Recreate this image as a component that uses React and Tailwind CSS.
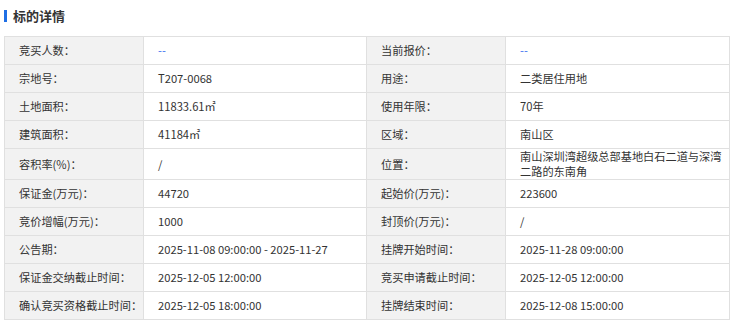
const ROWS = [
  ['竞买人数：', '--', '当前报价：', '--'],
  ['宗地号：', 'T207-0068', '用途：', '二类居住用地'],
  ['土地面积：', '11833.61㎡', '使用年限：', '70年'],
  ['建筑面积：', '41184㎡', '区域：', '南山区'],
  ['容积率(%)：', '/', '位置：', '南山深圳湾超级总部基地白石二道与深湾二路的东南角'],
  ['保证金(万元)：', '44720', '起始价(万元)：', '223600'],
  ['竞价增幅(万元)：', '1000', '封顶价(万元)：', '/'],
  ['公告期：', '2025-11-08 09:00:00 - 2025-11-27', '挂牌开始时间：', '2025-11-28 09:00:00'],
  ['保证金交纳截止时间：', '2025-12-05 12:00:00', '竞买申请截止时间：', '2025-12-05 12:00:00'],
  ['确认竞买资格截止时间：', '2025-12-05 18:00:00', '挂牌结束时间：', '2025-12-08 15:00:00'],
]

function Value({ text }) {
  // "--" placeholders are shown in blue
  if (text === '--') return <span className="text-[#3d6ff0]">--</span>
  return text
}

export default function App() {
  return (
    <div
      className="w-[740px] h-[330px] bg-white px-[4px] text-[#333]"
      style={{ fontFamily: '"Noto Sans CJK SC", sans-serif' }}
    >
      {/* Heading */}
      <div className="flex items-center h-[30px] pt-[1px]">
        <span className="w-[3px] h-[12px] bg-[#1f6fe5]" />
        <h2 className="ml-[6px] text-[13px] font-bold leading-none text-[#333]">标的详情</h2>
      </div>

      {/* Detail table */}
      <table className="mt-[6px] w-[725px] table-fixed border-collapse border border-[#e0e0e0] text-[11.2px] leading-[15px]">
        <colgroup>
          <col className="w-[139px]" />
          <col className="w-[223px]" />
          <col className="w-[139px]" />
          <col className="w-[224px]" />
        </colgroup>
        <tbody>
          {ROWS.map((r, i) => (
            <tr key={i} className="h-[28px]">
              <td className="border border-[#e0e0e0] bg-[#f2f2f2] pl-[14px] align-middle">{r[0]}</td>
              <td className="border border-[#e0e0e0] pl-[14px] pr-[6px] align-middle"><Value text={r[1]} /></td>
              <td className="border border-[#e0e0e0] bg-[#f2f2f2] pl-[14px] align-middle">{r[2]}</td>
              <td className="border border-[#e0e0e0] pl-[14px] pr-[6px] align-middle"><Value text={r[3]} /></td>
            </tr>
          ))}
        </tbody>
      </table>
    </div>
  )
}
